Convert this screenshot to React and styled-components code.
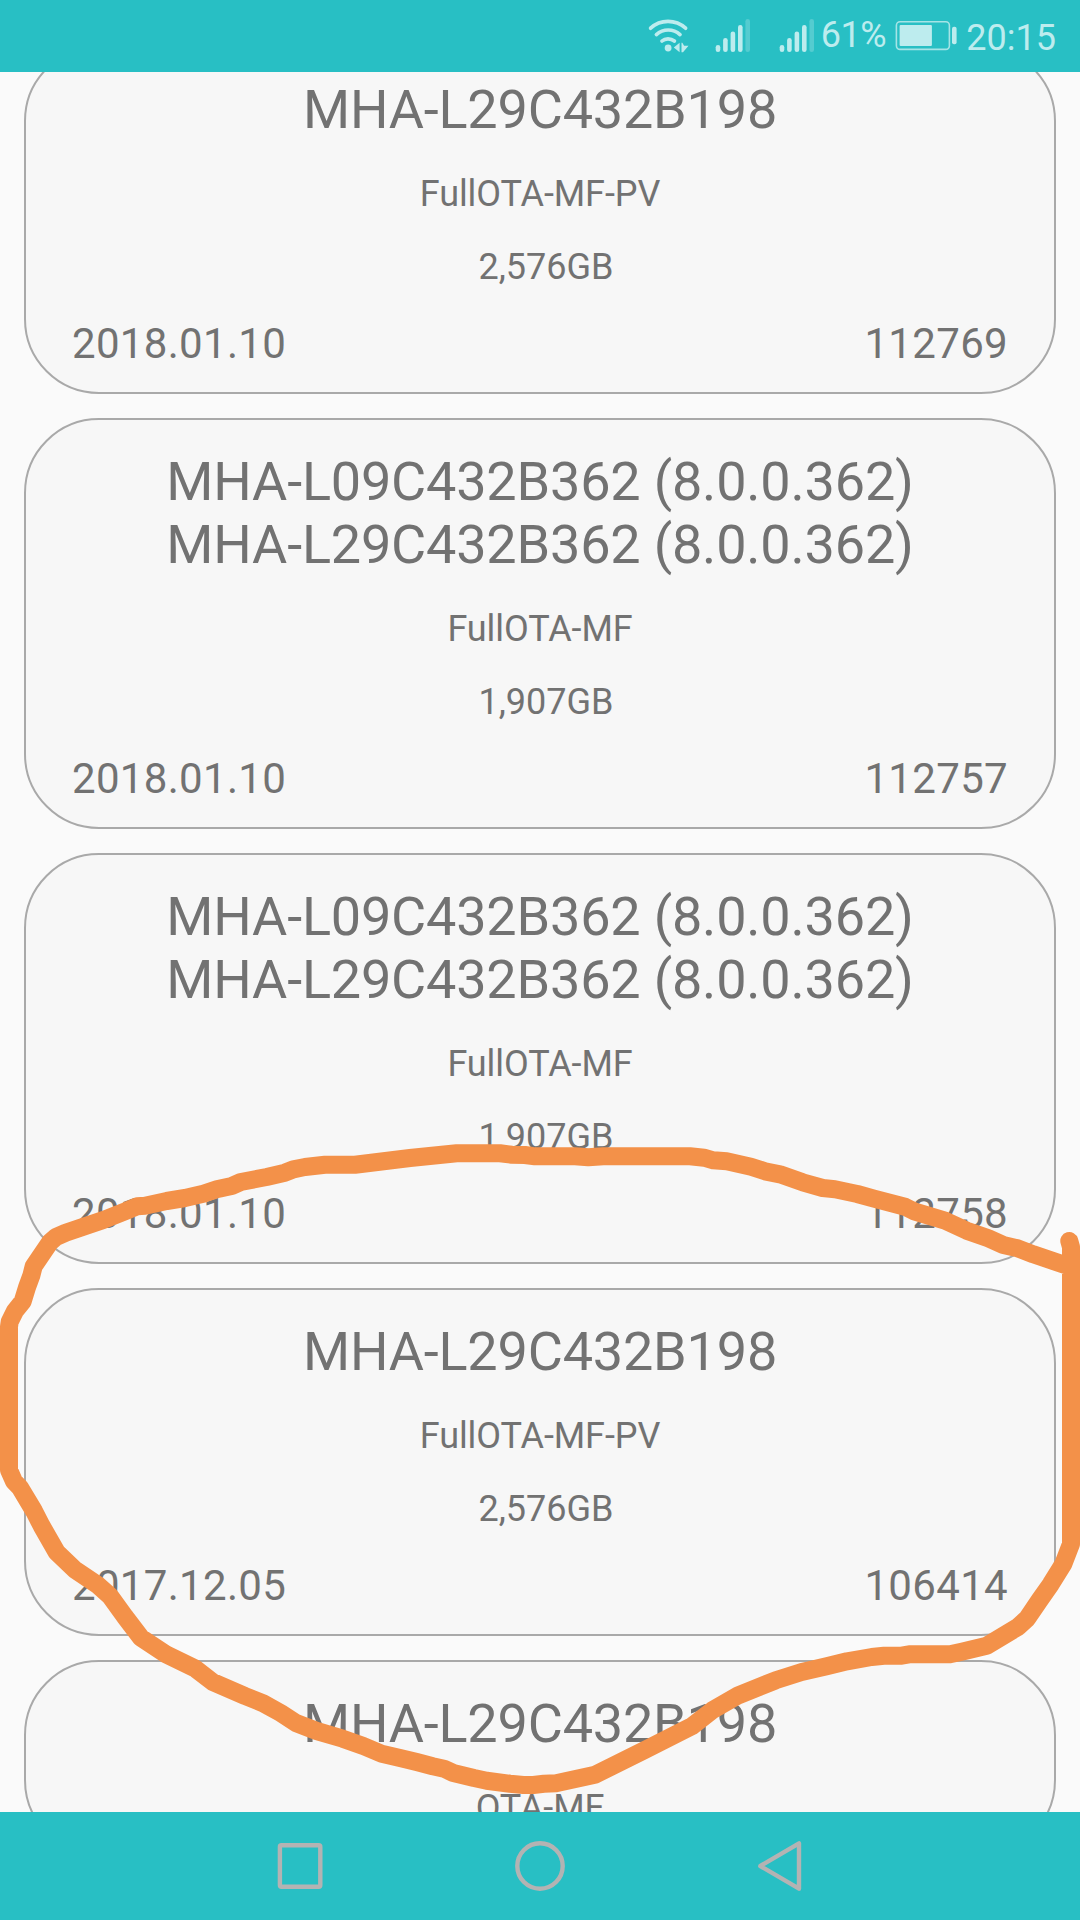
import React from 'react';
import styled, { createGlobalStyle } from 'styled-components';

const GlobalStyle = createGlobalStyle`
  body {
    margin: 0;
    background: #fafafa;
    font-family: Roboto, "Liberation Sans", sans-serif;
  }
`;

const Screen = styled.div`
  width: 1080px;
  height: 1920px;
  display: flex;
  flex-direction: column;
  overflow: hidden;
  background: #fafafa;
`;

const StatusBar = styled.header`
  flex: none;
  height: 72px;
  display: flex;
  align-items: flex-start;
  justify-content: flex-end;
  padding-right: 24px;
  box-sizing: border-box;
  background: #28bfc4;
  color: #bdecee;

  svg {
    display: block;
    flex: none;
  }
`;

const StatusText = styled.span`
  font-size: 36px;
  line-height: 42px;
  letter-spacing: ${props => props.$tracking || 0}px;
  padding-top: ${props => props.$top}px;
  margin-right: ${props => props.$gap || 0}px;
`;

const Viewport = styled.main`
  flex: 1;
  min-height: 0;
  position: relative;
  overflow: hidden;
`;

// the list is scrolled a little, so the first card starts under the status bar
const List = styled.div`
  display: flex;
  flex-direction: column;
  gap: 24px;
  margin-top: -26px;
  padding: 0 24px;
`;

const Card = styled.article`
  box-sizing: border-box;
  display: flex;
  flex-direction: column;
  padding: 30px 46px 24px;
  border: 2px solid #a9a9a9;
  border-radius: 75px;
  background: #f7f7f7;
  color: #727272;
  text-align: center;
`;

const Title = styled.div`
  font-size: 54px;
  line-height: 63px;
  letter-spacing: -0.19px;
`;

const Detail = styled.div`
  font-size: 36px;
  line-height: 42px;
  letter-spacing: -0.08px;
  margin-top: 32px;
`;

const Size = styled(Detail)`
  margin-top: 31px;
  padding-left: 12px;
  letter-spacing: 0;
`;

const Footer = styled.div`
  display: flex;
  justify-content: space-between;
  margin-top: 31px;
  font-size: 42px;
  line-height: 49px;
  letter-spacing: 0.32px;
`;

const Scribble = styled.svg`
  position: absolute;
  top: 0;
  left: 0;
  pointer-events: none;
`;

const NavBar = styled.nav`
  flex: none;
  height: 108px;
  display: flex;
  align-items: center;
  justify-content: center;
  gap: 180px;
  background: #28bfc4;

  svg {
    display: block;
    fill: none;
    stroke: #b3b3b3;
    stroke-width: 4.4;
    stroke-linejoin: round;
  }
`;

const firmwares = [
  { titles: ['MHA-L29C432B198'], type: 'FullOTA-MF-PV', size: '2,576GB', date: '2018.01.10', id: '112769' },
  { titles: ['MHA-L09C432B362 (8.0.0.362)', 'MHA-L29C432B362 (8.0.0.362)'], type: 'FullOTA-MF', size: '1,907GB', date: '2018.01.10', id: '112757' },
  { titles: ['MHA-L09C432B362 (8.0.0.362)', 'MHA-L29C432B362 (8.0.0.362)'], type: 'FullOTA-MF', size: '1,907GB', date: '2018.01.10', id: '112758' },
  { titles: ['MHA-L29C432B198'], type: 'FullOTA-MF-PV', size: '2,576GB', date: '2017.12.05', id: '106414' },
  { titles: ['MHA-L29C432B198'], type: 'OTA-MF' },
];

const scribblePoints = `
  1069.3,1241 1071,1247 1071,1544 1063.3,1564 1050.7,1584.3 1039.7,1600 1027.3,1618.3 1018.3,1626.7
  986.7,1645.7 961.7,1651.7 950,1654.3 909,1654.3 900.3,1655.8 884,1655.8 871.7,1657 847,1661.3
  826.7,1666.3 801.7,1672 775.7,1680.3 738.3,1695.3 712.7,1710 691.7,1726.3 643.3,1750.7 595,1774.7
  556,1783.3 544,1783.8 533.3,1785 523.3,1785 510,1783.7 486.7,1780.7 474,1778 453.3,1773
  444,1768.7 432.7,1766.2 416.7,1762 400,1758 381.7,1753.7 363.3,1746 342.7,1738.7 316.7,1731
  296,1723 280.7,1713 263.3,1703.3 245,1696 212.7,1682 195,1668.3 166.7,1654.7 141,1637.7
  125,1616.7 110,1596 97.7,1585 75,1569.7 56.7,1552.3 41.7,1526 34,1511 20,1487.7 14,1481.3
  9,1470 9,1326.7 9.7,1321.7 15,1311 22.7,1301.3 27,1287.3 31.3,1275.7 33.7,1266.3 50,1242.3
  56,1237 65.7,1232.7 103.3,1220 126,1211 137.3,1206.3 145,1205.7 166.7,1201 185,1198 203.3,1193.7
  216.7,1189.3 231.7,1186 240.7,1182 266.7,1177 285,1172.7 293.3,1169.3 305,1167 325,1164.7
  355,1164.7 410,1158 456.7,1153.3 500,1153.3 511.7,1154.7 525,1155 535,1156.3 575,1156.3
  588.3,1157.3 603.3,1156.3 690,1156.3 704,1157.7 713.3,1160.3 726.7,1161.3 751,1166.7 765,1171.3
  780,1174.3 802.7,1182.3 822.7,1188 835,1189.2 857.3,1194 874,1198.7 905,1206.7 915,1211.7
  945,1220.7 966.7,1230.7 988.3,1238.3 1003.3,1245 1017.7,1248.3 1033.3,1254.3 1062,1264 1071,1267
`;

const WifiIcon = () => (
  <svg width="68" height="72" viewBox="646 0 68 72" fill="none" stroke="#bdecee" strokeWidth="3.7" strokeLinecap="round">
    <path d="M650.6 28.2Q658 21.4 668 21.4T685.6 28.2" />
    <path d="M656.4 34.6Q661.5 30 668.2 30T680 34.6" />
    <path d="M662 41Q664.4 38.8 668 38.8T674.4 41" />
    <circle cx="668.1" cy="48" r="3.4" fill="#bdecee" stroke="none" />
    <path d="M673.8 47.5L679.6 42.8v9.4zM681.5 42.8h.8l1.8 2.9h4.4L683 52.2h-1.5z" fill="#bdecee" stroke="none" />
  </svg>
);

const SignalIcon = ({ width }) => (
  <svg width={width} height="72" viewBox={`0 0 ${width} 72`} fill="#bdecee">
    <rect x="1.7" y="45" width="4.6" height="7" rx="2.3" />
    <rect x="9.1" y="38" width="4.6" height="14" rx="2.3" />
    <rect x="16.6" y="31.5" width="4.6" height="20.5" rx="2.3" />
    <rect x="24" y="25" width="4.6" height="27" rx="2.3" />
    <rect x="31.4" y="19" width="4.6" height="33" rx="2.3" fill="#54ccd0" />
  </svg>
);

const BatteryIcon = () => (
  <svg width="72" height="72" viewBox="894 0 72 72" fill="#bdecee">
    <rect x="896.4" y="21.8" width="53" height="27.6" rx="3.6" fill="none" stroke="#a5e4e6" strokeWidth="1.6" />
    <rect x="899.6" y="25" width="32.3" height="21" rx="1" />
    <rect x="952" y="26.7" width="4.6" height="17.6" rx="2" />
  </svg>
);

const FirmwareCard = ({ titles, type, size, date, id }) => (
  <Card>
    {titles.map(title => <Title key={title}>{title}</Title>)}
    <Detail>{type}</Detail>
    {size && <Size>{size}</Size>}
    {date && (
      <Footer>
        <span>{date}</span>
        <span>{id}</span>
      </Footer>
    )}
  </Card>
);

const App = () => (
  <Screen>
    <GlobalStyle />
    <StatusBar>
      <WifiIcon />
      <SignalIcon width={64} />
      <SignalIcon width={43} />
      <StatusText $top={14} $gap={8} $tracking={-0.4}>61%</StatusText>
      <BatteryIcon />
      <StatusText $top={17}>20:15</StatusText>
    </StatusBar>
    <Viewport>
      <List>
        {firmwares.map((item, i) => <FirmwareCard key={i} {...item} />)}
      </List>
      <Scribble width="1080" height="1740" viewBox="0 72 1080 1740">
        <polyline
          points={scribblePoints}
          fill="none"
          stroke="#f39149"
          strokeWidth="18"
          strokeLinecap="round"
          strokeLinejoin="round"
        />
      </Scribble>
    </Viewport>
    <NavBar>
      <svg width="60" height="60" viewBox="0 0 60 60">
        <rect x="9.9" y="9.3" width="40.4" height="41.4" rx="1.5" />
      </svg>
      <svg width="60" height="60" viewBox="0 0 60 60">
        <circle cx="30" cy="30" r="22.7" />
      </svg>
      <svg width="60" height="60" viewBox="0 0 60 60">
        <path d="M10.3 30L49 7.3v45.4z" />
      </svg>
    </NavBar>
  </Screen>
);

export default App;
